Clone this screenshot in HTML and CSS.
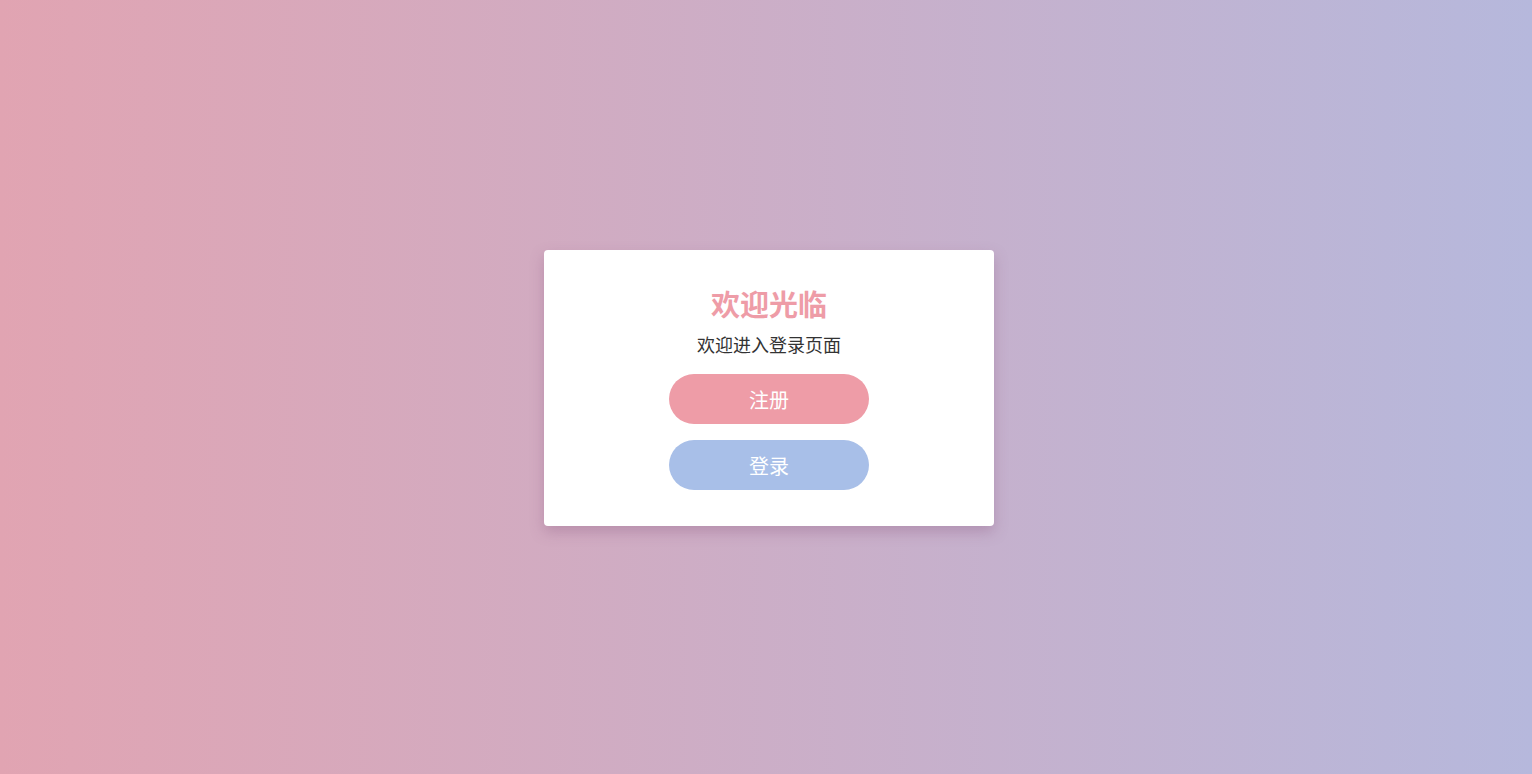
FILE: index.html
```html
<!DOCTYPE html>
<html lang="zh">
<head>
<meta charset="utf-8">
<link rel="stylesheet" href="styles.css">
</head>
<body>
<div class="page">
  <div class="card">
    <h1 class="title">欢迎光临</h1>
    <p class="subtitle">欢迎进入登录页面</p>
    <button class="btn btn-register">注册</button>
    <button class="btn btn-login">登录</button>
  </div>
</div>
</body>
</html>
```
FILE: styles.css
```css
html, body {
  margin: 0;
  padding: 0;
  height: 100%;
}
body {
  font-family: "Noto Sans CJK SC", "Noto Sans", sans-serif;
  background: linear-gradient(to right, #e1a4b2, #b6b8dc);
}
.page {
  height: 100%;
  display: flex;
  align-items: center;
  justify-content: center;
  padding-left: 6px;
  padding-top: 2px;
  box-sizing: border-box;
}
.card {
  width: 450px;
  height: 276px;
  box-sizing: border-box;
  background: #fff;
  border-radius: 4px;
  box-shadow: 0 6px 14px rgba(140, 90, 130, 0.35);
  display: flex;
  flex-direction: column;
  align-items: center;
  padding-top: 37px;
}
.title {
  margin: 0;
  font-size: 29px;
  line-height: 32px;
  font-weight: bold;
  color: #ee9ca7;
}
.subtitle {
  margin: 13px 0 0;
  font-size: 18px;
  line-height: 24px;
  color: #333;
}
.btn {
  width: 200px;
  height: 50px;
  border: none;
  border-radius: 25px;
  font-family: inherit;
  font-size: 20px;
  color: #fff;
  padding: 0;
  cursor: pointer;
}
.btn-register {
  margin-top: 18px;
  background: #ee9ca7;
}
.btn-login {
  margin-top: 16px;
  background: #a8bfe8;
}
```
